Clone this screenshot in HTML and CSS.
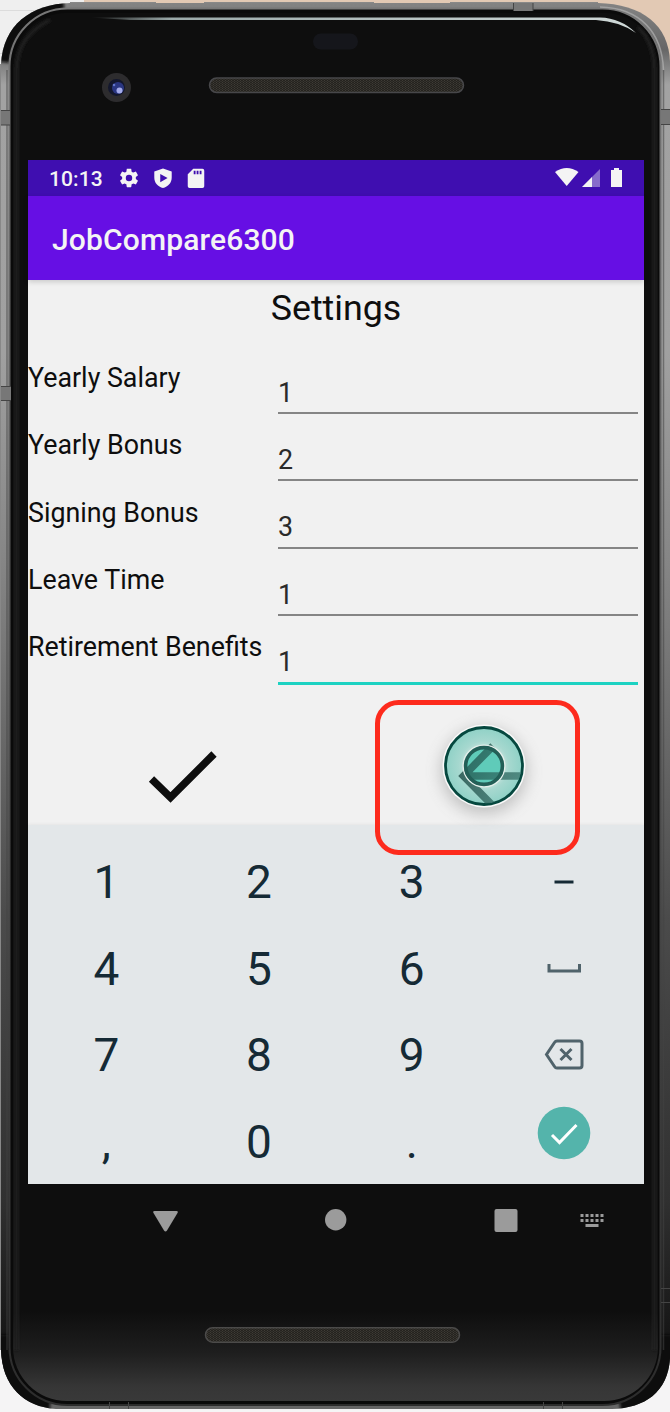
FILE: index.html
```
<!DOCTYPE html>
<html lang="en">
<head>
<meta charset="utf-8">
<title>JobCompare6300</title>
<link rel="stylesheet" href="styles.css">
</head>
<body>
<div class="stage">
  <svg class="shell" viewBox="0 0 670 1412" width="670" height="1412" aria-hidden="true">
    <defs>
      <linearGradient id="metal" x1="0" y1="0" x2="0" y2="1">
        <stop offset="0" stop-color="#858585"/><stop offset=".035" stop-color="#666"/><stop offset=".06" stop-color="#a2a2a2"/><stop offset=".25" stop-color="#a0a0a0"/><stop offset=".4" stop-color="#858585"/><stop offset=".65" stop-color="#4b4b4b"/><stop offset=".85" stop-color="#303030"/><stop offset=".95" stop-color="#151515"/><stop offset=".99" stop-color="#151515"/><stop offset=".995" stop-color="#666"/><stop offset="1" stop-color="#666"/>
      </linearGradient>
      <linearGradient id="rim" x1="0" y1="0" x2="0" y2="1">
        <stop offset="0" stop-color="#777"/><stop offset=".5" stop-color="#505050"/><stop offset="1" stop-color="#2c2c2c"/>
      </linearGradient>
      <linearGradient id="chin" x1="0" y1="0" x2="0" y2="1">
        <stop offset="0" stop-color="#0e0e0e"/><stop offset=".935" stop-color="#0e0e0e"/><stop offset=".965" stop-color="#1e1e1e"/><stop offset=".99" stop-color="#363636"/><stop offset="1" stop-color="#393939"/>
      </linearGradient>
      <linearGradient id="shine"><stop offset="0" stop-color="#aebdbd" stop-opacity="0"/><stop offset=".15" stop-color="#9baaaa"/><stop offset="1" stop-color="#d0d9d8"/></linearGradient>
      <filter id="soft"><feGaussianBlur stdDeviation="1.500"/></filter>
      <clipPath id="body"><path d="M70 3H598C642 4 669 25 670 62V1358C668 1392 645 1408 612 1409H56C24 1407 2 1386 1 1350V64C3 25 31 4 70 3Z"/></clipPath>
    </defs>
    <rect width="670" height="1412" fill="#f5f4f5"/>
    <path fill="#e2c9b4" d="M84 0H670V140H84Z"/>
    <path fill="#efefef" d="M0 0H84V140H0Z"/>
    <path fill="#dcdcdc" d="M0 10H40V11H0ZM0 53H4V54H0Z"/>
    <path fill="#888" d="M0 64H3V1350H0ZM70 2H156V4H70ZM204 2H374V4H204ZM450 2H598V4H450Z"/>
    <g clip-path="url(#body)">
      <rect width="670" height="1412" fill="url(#metal)"/>
      <path d="M3 62C6 30 30 7 64 6" fill="none" stroke="#101010" stroke-width="14" filter="url(#soft)"/>
      <path d="M2 1335C3 1380 26 1404 50 1405M668 1335C667 1380 650 1402 620 1405" fill="none" stroke="#101010" stroke-width="14" filter="url(#soft)"/>
      <rect x="9.500" y="8.500" width="651" height="1396.500" rx="58" fill="#0a0a0a" stroke="url(#rim)" stroke-width="2"/>
      <path d="M7 70V1350M663.500 70V1350" fill="none" stroke="#444" stroke-width="1.500" opacity=".55"/>
      <path d="M600 7C640 8 662 32 663.500 70" fill="none" stroke="#b0b0b0" stroke-width="1.500" opacity=".7"/>
    </g>
    <rect x="13" y="13" width="645" height="1388" rx="54" fill="url(#chin)"/>
    <path d="M16.500 1350V70Q17 36 50 20M654.500 1350V70Q654 42 638 27" fill="none" stroke="#242424" stroke-width="3" filter="url(#soft)"/>
    <path d="M90 17.500H600Q621 18 636 33Q620 21.500 596 20H130Z" fill="url(#shine)"/>
    <path d="M1 110H10V125H1ZM1 386H11V400H1ZM661 109H670V124H661ZM514 3H533V11H514Z" fill="#777"/>
    <path d="M1 110.500H10M1 125H10M1 386.500H11M1 400.500H11M661 109.500H670M661 124.500H670M513.500 3V11M533 3V11M109.500 1402V1409M128.500 1402V1409M543.500 1402V1409M562.500 1402V1409M661 1288.500H670M661 1302.500H670" stroke="#444" fill="none"/>
    <rect x="313" y="33.500" width="45" height="16" rx="8" fill="#15161b"/>
    <circle cx="116.500" cy="87.500" r="14.500" fill="#2d2c2e"/>
    <circle cx="116.500" cy="87.500" r="8.500" fill="#13172d"/>
    <circle cx="118" cy="88" r="6" fill="#2a3682"/>
    <circle cx="119.500" cy="90.500" r="3" fill="#a4abea"/>
    <circle cx="114" cy="85" r="1.300" fill="#6175cc"/>
    <defs><pattern id="mesh" width="3" height="2" patternUnits="userSpaceOnUse"><rect width="3" height="2" fill="#25231f"/><path d="M0 0H1V1H0ZM1.500 1H2.500V2H1.500Z" fill="#3f3c36"/></pattern></defs>
    <rect x="209.500" y="78" width="254" height="14.500" rx="7.200" fill="url(#mesh)" stroke="#47474a" stroke-width="1.500"/>
    <rect x="205.500" y="1327.700" width="254" height="14.500" rx="7.200" fill="url(#mesh)" stroke="#4b4a49" stroke-width="1.500"/>
  </svg>

  <main class="screen">
    <div class="status">
      <span class="time">10:13</span>
      <svg class="si" viewBox="0 0 24 24"><path fill="#f4f4f4" d="M19.430 12.980c.04-.32.07-.64.07-.98s-.03-.66-.07-.98l2.110-1.650c.19-.15.24-.42.12-.64l-2-3.460c-.12-.22-.39-.3-.61-.22l-2.490 1c-.52-.4-1.080-.73-1.690-.98l-.38-2.650C14.460 2.180 14.250 2 14 2h-4c-.25 0-.46.18-.49.42l-.38 2.650c-.61.25-1.170.59-1.690.98l-2.490-1c-.23-.09-.49 0-.61.22l-2 3.460c-.13.22-.07.49.12.64l2.110 1.650c-.04.32-.07.65-.07.98s.03.66.07.98l-2.110 1.650c-.19.15-.24.42-.12.64l2 3.460c.12.22.39.3.61.22l2.490-1c.52.4 1.080.73 1.690.98l.38 2.650c.03.24.24.42.49.42h4c.25 0 .46-.18.49-.42l.38-2.650c.61-.25 1.170-.59 1.690-.98l2.490 1c.23.09.49 0 .61-.22l2-3.460c.12-.22.07-.49-.12-.64zM12 15.500A3.500 3.500 0 1 1 12 8.500a3.500 3.500 0 0 1 0 7z"/></svg>
      <svg class="si" viewBox="0 0 24 24"><path fill="#f4f4f4" fill-rule="evenodd" d="M12 1.500L21.500 5V11.500C21.500 17.500 17.500 21.500 12 23C6.500 21.500 2.500 17.500 2.500 11.500V5ZM9 7.500V16.500L17 12Z"/></svg>
      <svg class="si" viewBox="0 0 24 24"><path fill="#f4f4f4" fill-rule="evenodd" d="M9 2H19Q21 2 21 4V21Q21 23 19 23H5Q3 23 3 21V8ZM9.500 4V8H11.500V4ZM12.700 4V8H14.700V4ZM16 4V8H18V4Z"/></svg>
      <svg class="signals" viewBox="0 0 68 22"><path fill="#f4f4f4" d="M0 5Q11.700-3 23.500 5L11.700 19Z"/><path fill="#f4f4f4" d="M27 20L45 2V20Z" opacity=".4"/><path fill="#f4f4f4" d="M27 20L37 10V20ZM56 3H59V1H64V3H67V20H56Z"/></svg>
    </div>
    <header class="appbar">JobCompare6300</header>
    <section class="content">
      <h1>Settings</h1>
      <form class="fields">
        <div class="row"><label>Yearly Salary</label><span class="input">1</span></div>
        <div class="row"><label>Yearly Bonus</label><span class="input">2</span></div>
        <div class="row"><label>Signing Bonus</label><span class="input">3</span></div>
        <div class="row"><label>Leave Time</label><span class="input">1</span></div>
        <div class="row"><label>Retirement Benefits</label><span class="input focus">1</span></div>
      </form>
      <div class="actions">
        <svg class="confirm" viewBox="0 0 70 54"><path d="M3.500 29L22.500 47.500L66 4" fill="none" stroke="#0e0e0e" stroke-width="7.500"/></svg>
      </div>
      <svg class="touch" viewBox="0 0 206 156">
        <defs>
          <radialGradient id="glow"><stop offset=".35" stop-color="#ddeae5"/><stop offset=".65" stop-color="#a6d8cf"/><stop offset="1" stop-color="#8fd1c6"/></radialGradient>
          <linearGradient id="fade" gradientUnits="userSpaceOnUse" x1="84" y1="60" x2="146" y2="90"><stop offset="0" stop-color="#234e49"/><stop offset="1" stop-color="#458279"/></linearGradient>
          <filter id="shadow" x="-50%" y="-50%" width="200%" height="200%"><feGaussianBlur stdDeviation="8"/></filter>
          <clipPath id="disc"><circle cx="109" cy="66" r="37.500"/></clipPath>
        </defs>
        <circle cx="109" cy="71" r="43" fill="#777" opacity=".4" filter="url(#shadow)"/>
        <circle cx="109" cy="66" r="41.500" fill="#fafafa"/>
        <circle cx="109" cy="66" r="38.500" fill="url(#glow)" stroke="#06483f" stroke-width="2.800"/>
        <circle cx="109" cy="66" r="18.500" fill="#6ad3c1"/>
        <path clip-path="url(#disc)" d="M118 46L88.500 76L121 109M90 76H150" fill="none" stroke="url(#fade)" stroke-width="7.500" opacity=".85"/>
        <circle cx="109" cy="66" r="20.800" fill="none" stroke="#e4efeb" stroke-width="1.500"/>
        <circle cx="109" cy="66" r="18.400" fill="#21a38f" fill-opacity=".15" stroke="#235f57" stroke-width="3.600"/>
        <rect x="2.500" y="2.500" width="200" height="150" rx="21" fill="none" stroke="#fd2b1d" stroke-width="5"/>
      </svg>
    </section>
    <section class="keyboard">
      <span>1</span><span>2</span><span>3</span><svg viewBox="0 0 56 56"><path d="M18.500 28H37.500" stroke="#152a35" stroke-width="3"/></svg>
      <span>4</span><span>5</span><span>6</span><svg viewBox="0 0 56 56"><path d="M13 23V30H43.500V23" fill="none" stroke="#50636b" stroke-width="3"/></svg>
      <span>7</span><span>8</span><span>9</span><svg viewBox="0 0 56 56"><path d="M21 14H43.500Q46 14 46 16.500V38.500Q46 41 43.500 41H21Q19.500 41 18.500 39.500L10.500 27.500L18.500 15.500Q19.500 14 21 14ZM24.500 22L35.500 33M35.500 22L24.500 33" fill="none" stroke="#50636b" stroke-width="3"/></svg>
      <span>,</span><span>0</span><span>.</span><svg class="enter" viewBox="0 0 56 56"><circle cx="28" cy="28" r="26.300" fill="#54b4ab"/><path d="M16 30L23.500 37.500L40.500 20" fill="none" stroke="#fff" stroke-width="3"/></svg>
    </section>
  </main>
  <svg class="nav" viewBox="0 0 616 72"><g fill="#9b9b9b"><path d="M126.500 27H148.500Q150.500 27 149.500 29L139 46.500Q137.500 48.500 136 46.500L125.500 29Q124.500 27 126.500 27Z"/><circle cx="307.700" cy="35.700" r="10.700"/><rect x="466.500" y="25" width="23" height="23" rx="2"/><path d="M552.500 30h3v3h-3zM557.500 30h3v3h-3zM562.500 30h3v3h-3zM567.500 30h3v3h-3zM572.500 30h3v3h-3zM552.500 35h3v3h-3zM557.500 35h3v3h-3zM562.500 35h3v3h-3zM567.500 35h3v3h-3zM572.500 35h3v3h-3zM557.500 40h13v3h-13z"/></g></svg>
</div>
</body>
</html>
```
FILE: styles.css
```
* { box-sizing: border-box; }
body { margin: 0; font-family: Roboto, "Noto Sans", sans-serif; }
.stage { position: relative; width: 670px; height: 1412px; padding: 160px 26px 0 28px; overflow: hidden; }
.shell { position: absolute; inset: 0; }
.screen { position: relative; width: 616px; height: 1024px; display: flex; flex-direction: column; background: #f1f1f1; }
.status { height: 36px; flex: none; background: #3f0eb0; display: flex; align-items: center; padding: 0 21px 0 21px; color: #f4f4f4; }
.time { font-size: 21px; font-weight: 500; width: 69px; padding-top: 2px; letter-spacing: .1px; white-space: nowrap; }
.si { width: 22px; height: 22px; margin-right: 11.500px; }
.signals { width: 68px; height: 22px; margin-left: auto; }
.appbar { height: 84px; flex: none; background: #660fe4; color: #f4f4f4; font-size: 30px; font-weight: 500; letter-spacing: .15px; line-height: 87px; padding-left: 24px; box-shadow: 0 2px 5px rgba(0,0,0,.16); z-index: 1; }
.content { position: relative; height: 545px; flex: none; }
h1 { margin: 0; height: 56px; font-size: 35.800px; font-weight: 400; line-height: 57px; text-align: center; color: #0e0e0e; }
.fields { display: grid; grid-auto-rows: 67.400px; padding-right: 6px; }
.row { display: grid; grid-template-columns: 250px 1fr; }
label { font-size: 26.800px; line-height: 32px; padding-top: 25.800px; color: #0e0e0e; white-space: nowrap; }
.input { font-size: 26.800px; line-height: 32px; height: 78px; padding-top: 40.600px; color: #2a2a2a; border-bottom: 2px solid #858585; }
.input.focus { border-bottom: 3px solid #1cd2c2; height: 79px; }
.actions { display: flex; padding: 77px 0 0 120px; }
.confirm { width: 70px; height: 54px; }
.touch { position: absolute; left: 347px; top: 420px; width: 206px; height: 156px; z-index: 2; }
.keyboard { height: 359px; flex: none; background: #e3e7e9; display: grid; grid-template-columns: repeat(4, 152.700px); grid-template-rows: repeat(4, 86.600px); align-items: center; justify-items: center; padding: 14px 0 0 2px; font-size: 46px; color: #152a35; box-shadow: 0 -1px 3px rgba(0,0,0,.05); }
.keyboard svg { width: 56px; height: 56px; }
.keyboard .enter { margin-top: -18px; }
.nav { position: relative; display: block; width: 616px; height: 72px; }
```
